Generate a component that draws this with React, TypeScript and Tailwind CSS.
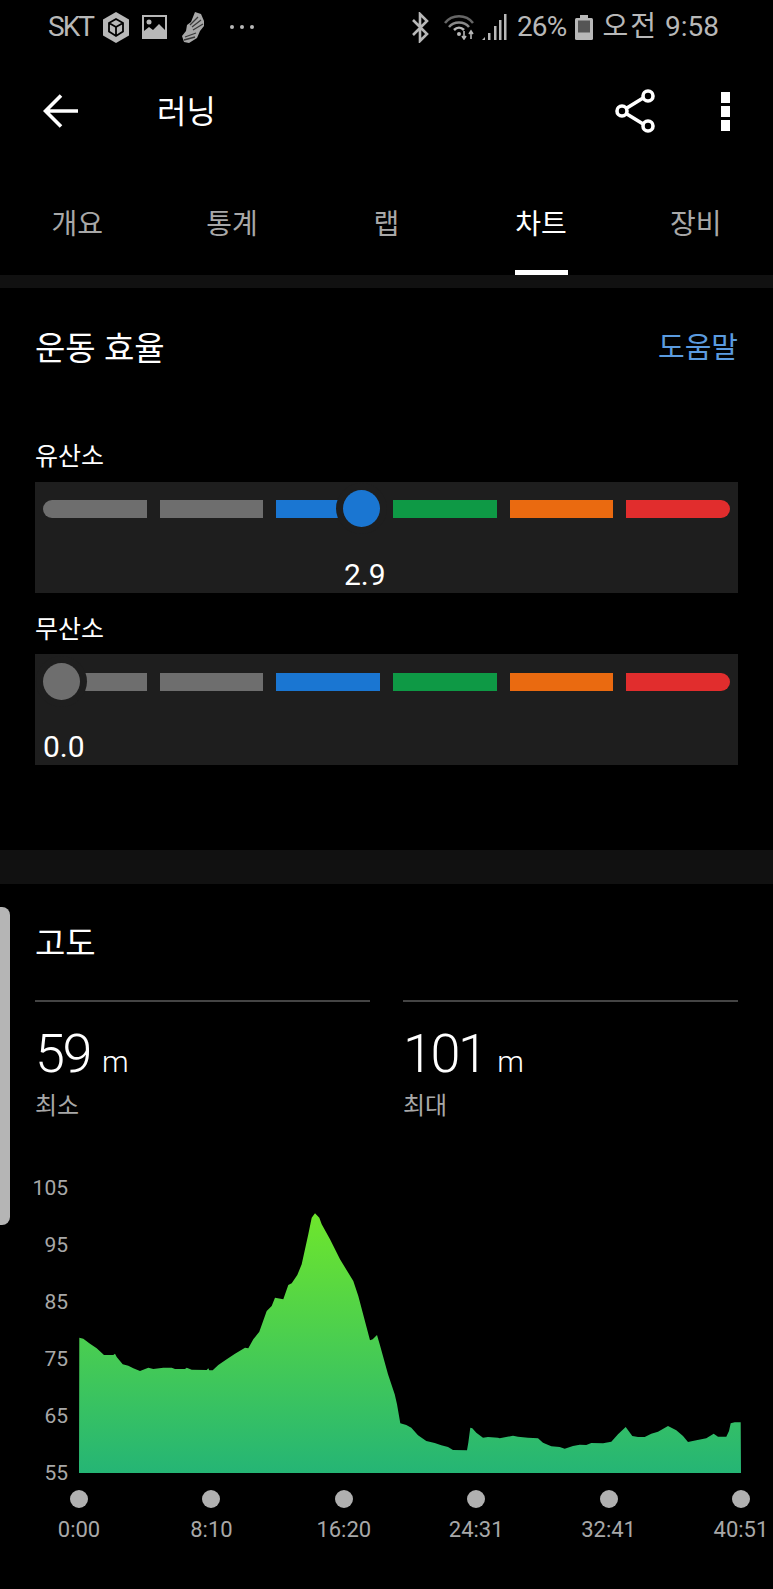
import { FC } from 'react';

const TABS = ['개요', '통계', '랩', '차트', '장비'];
const TICKS = ['0:00', '8:10', '16:20', '24:31', '32:41', '40:51'];
const Y_LABELS = ['105', '95', '85', '75', '65', '55'];

// traced from the two halves of the chart, in 3x crop coordinates
const LEFT = [
  [238, 500], [250, 503], [270, 518], [290, 532], [312, 552], [340, 552], [345, 548], [350, 558], [368, 580],
  [385, 584], [400, 592], [420, 600], [445, 590], [460, 594], [490, 590], [515, 590], [525, 594], [555, 594],
  [560, 590], [575, 596], [620, 597], [625, 592], [628, 598], [638, 598], [655, 582], [680, 565], [705, 548],
  [735, 530], [745, 532], [760, 505], [778, 482], [800, 420], [815, 405], [825, 380], [850, 385], [865, 342],
  [875, 337], [892, 312], [905, 280], [925, 190], [935, 140], [945, 127], [958, 140], [965, 160], [990, 205],
  [1020, 265], [1060, 330], [1075, 375], [1110, 508], [1118, 505],
];
const RIGHT = [
  [12, 492], [20, 520], [45, 610], [65, 670], [72, 700], [82, 757], [100, 762], [115, 770], [135, 793], [160, 810],
  [185, 816], [205, 823], [225, 828], [240, 837], [282, 838], [286, 815], [292, 770], [298, 772], [310, 785],
  [330, 800], [345, 798], [375, 800], [380, 802], [420, 794], [435, 797], [465, 800], [495, 802], [510, 815],
  [535, 826], [560, 828], [575, 833], [600, 825], [620, 821], [640, 822], [655, 816], [690, 817], [715, 812],
  [735, 790], [758, 768], [778, 795], [795, 798], [815, 798], [835, 788], [855, 782], [885, 765], [910, 778],
  [930, 795], [945, 813], [970, 808], [1000, 802], [1022, 788], [1035, 797], [1060, 797], [1068, 780], [1073, 757],
  [1085, 754], [1103, 754],
];

const areaPath = () => {
  const pts = [
    ...LEFT.map(([x, y]) => [x / 3 - 79, y / 3 - 2]),
    ...RIGHT.map(([x, y]) => [373 + x / 3 - 79, y / 3 - 2]),
  ];
  return `M0 300 L${pts.map(([x, y]) => `${x.toFixed(1)} ${y.toFixed(1)}`).join(' L')} L662 300 Z`;
};

const StatusBar: FC = () => (
  <div className="flex h-[54px] items-center justify-between pl-[48px] pr-[54px] text-[28px] text-[#b8b8b8]">
    <div className="flex items-center">
      <span className="tracking-[-2px]">SKT</span>
      <svg className="ml-[10px]" width="26" height="31" viewBox="0 0 26 31">
        <path d="M13 0 L26 7.5 V23.5 L13 31 L0 23.5 V7.5 Z" fill="#b8b8b8" />
        <path d="M13 7 L20 11 V19.5 L13 24 L6 19.5 V11 Z M6 11 L13 15 L20 11 M13 15 V24" fill="none" stroke="#000" strokeWidth="1.8" />
      </svg>
      <svg className="ml-[13px]" width="25" height="24" viewBox="0 0 25 24">
        <rect x="1" y="1" width="23" height="22" fill="none" stroke="#b8b8b8" strokeWidth="2" />
        <circle cx="7" cy="7" r="2.5" fill="#b8b8b8" />
        <path d="M2 22 V16 L7 12 L11 15 L17 9 L23 15 V22 Z" fill="#b8b8b8" />
      </svg>
      <svg className="ml-[15px]" width="23" height="31" viewBox="0 0 23 31">
        <path d="M13 0 L19 2 L22 9 L22 14 L18 19 L15 26 L7 31 L2 30 L0 24 L4 19 L5 13 L9 10 Z" fill="#a8a8a8" />
        <path d="M8 13 L16 5 M10 15 L19 8 M11 18 L21 12 M3 25 L14 21 M2 28 L13 25" stroke="#3a3a3a" strokeWidth="1.3" />
      </svg>
      <div className="ml-[25px] flex gap-[6px]">
        <span className="h-1 w-1 rounded-full bg-[#b8b8b8]" />
        <span className="h-1 w-1 rounded-full bg-[#b8b8b8]" />
        <span className="h-1 w-1 rounded-full bg-[#b8b8b8]" />
      </div>
    </div>
    <div className="flex items-center">
      <svg width="18" height="31" viewBox="0 0 18 31">
        <path d="M2 8 L16 22 L9 29 V2 L16 9 L2 23" fill="none" stroke="#b8b8b8" strokeWidth="2.6" />
      </svg>
      <svg className="ml-[15px]" width="32" height="26" viewBox="0 0 32 26">
        <path d="M1 9 C8 0 22 0 29 9" fill="none" stroke="#666" strokeWidth="2.5" />
        <path d="M5 13 C10 7 20 7 25 13" fill="none" stroke="#8a8a8a" strokeWidth="2.5" />
        <path d="M10 16 C13 13 17 13 20 16" fill="none" stroke="#b8b8b8" strokeWidth="2.5" />
        <circle cx="15" cy="20" r="2" fill="#b8b8b8" />
        <path d="M20 17 V24 M18 22 L20 25 L22 22 M27 25 V18 M25 20 L27 17 L29 20" fill="none" stroke="#b8b8b8" strokeWidth="1.6" />
      </svg>
      <svg className="ml-[5px]" width="26" height="26" viewBox="0 0 26 26">
        <path d="M1 26 L4 23 V26 Z" fill="#b8b8b8" />
        <rect x="7" y="19" width="2.5" height="7" fill="#b8b8b8" />
        <rect x="13" y="12" width="2.5" height="14" fill="#b8b8b8" />
        <rect x="18" y="6" width="2.5" height="20" fill="#b8b8b8" />
        <rect x="23" y="0" width="2.5" height="26" fill="#b8b8b8" />
      </svg>
      <span className="ml-[10px] tracking-[-0.8px]">26%</span>
      <svg className="ml-[9px]" width="18" height="25" viewBox="0 0 18 25">
        <rect x="5" y="0" width="8" height="3" fill="#b8b8b8" />
        <rect x="0" y="3" width="18" height="22" rx="1.5" fill="#b8b8b8" />
        <rect x="3" y="5.5" width="12" height="12" fill="#555" />
      </svg>
      <span className="ml-[9px] tracking-[2px]">오전</span>
      <span className="ml-[7px]">9:58</span>
    </div>
  </div>
);

const Header: FC = () => (
  <div className="flex h-[114px] items-center pl-[43px] pr-[43px]">
    <svg width="35" height="34" viewBox="0 0 35 34">
      <path d="M18 1.5 L2.5 17 L18 32.5 M3 17 H35" fill="none" stroke="#fff" strokeWidth="3.6" />
    </svg>
    <span className="ml-[79px] mt-[2px] flex-1 text-[32px] leading-none text-white">러닝</span>
    <svg width="40" height="44" viewBox="0 0 40 44">
      <path d="M33 6 L7 22 L33 38" fill="none" stroke="#fff" strokeWidth="3.6" />
      <circle cx="33" cy="7" r="5" fill="#000" stroke="#fff" strokeWidth="3.6" />
      <circle cx="7" cy="22" r="5" fill="#000" stroke="#fff" strokeWidth="3.6" />
      <circle cx="33" cy="37" r="5" fill="#000" stroke="#fff" strokeWidth="3.6" />
    </svg>
    <div className="ml-[66px] flex flex-col gap-[3px]">
      <span className="h-[11px] w-[9px] bg-white" />
      <span className="h-[11px] w-[9px] bg-white" />
      <span className="h-[11px] w-[9px] bg-white" />
    </div>
  </div>
);

const Tabs: FC = () => (
  <div className="grid h-[107px] grid-cols-5">
    {TABS.map((tab) => {
      const active = tab === '차트';
      return (
        <div key={tab} className="flex flex-col items-center pt-[37px]">
          <span className={`h-[40px] text-[28px] leading-[40px] ${active ? 'text-white' : 'text-[#a8a8a8]'}`}>{tab}</span>
          {active ? <span className="mt-[25px] h-[5px] w-[53px] bg-white" /> : null}
        </div>
      );
    })}
  </div>
);

const ZoneBar: FC<{ knobClass: string; knobLeft: string }> = ({ knobClass, knobLeft }) => (
  <div className="relative flex h-[37px] items-center gap-[13px] px-[8px]">
    <div className="h-[18px] flex-1 rounded-l-full bg-[#6e6e6e]" />
    <div className="h-[18px] flex-1 bg-[#6e6e6e]" />
    <div className="h-[18px] flex-1 bg-[#1a76d2]" />
    <div className="h-[18px] flex-1 bg-[#0e9945]" />
    <div className="h-[18px] flex-1 bg-[#ea6a10]" />
    <div className="h-[18px] flex-1 rounded-r-full bg-[#e12d2d]" />
    <div className={`absolute top-0 h-[37px] w-[37px] rounded-full ring-[7px] ring-[#1e1e1e] ${knobClass} ${knobLeft}`} />
  </div>
);

const MinMax: FC<{ value: string; label: string }> = ({ value, label }) => (
  <div className="border-t-2 border-[#444] pt-[22px]">
    <div className="flex h-[60px] items-baseline leading-[60px] text-white">
      <span className="text-[54px] font-light tracking-[-2.5px]">{value}</span>
      <span className="ml-[12px] text-[30px] font-light">m</span>
    </div>
    <div className="mt-[8px] text-[24px] leading-[28px] text-[#a8a8a8]">{label}</div>
  </div>
);

export default function App() {
  return (
    <div className="relative h-[1589px] w-full overflow-hidden bg-black font-[Roboto,'Noto_Sans_CJK_KR',sans-serif]">
      <StatusBar />
      <Header />
      <Tabs />
      <div className="h-[13px] bg-[#111]" />

      <div className="h-[562px] px-[35px]">
        <div className="flex h-[118px] items-center justify-between pt-[2px]">
          <span className="text-[33px] leading-none text-white">운동 효율</span>
          <span className="text-[29px] leading-none text-[#5b9bdf]">도움말</span>
        </div>

        <div className="pb-[11px] pt-[37px] text-[25px] leading-[28px] text-white">유산소</div>
        <div className="h-[111px] bg-[#1e1e1e] pt-[8px]">
          <ZoneBar knobClass="bg-[#1a76d2]" knobLeft="left-[308px]" />
          <div className="mt-[33px] pl-[309px] text-[30px] leading-[30px] text-white">2.9</div>
        </div>

        <div className="pb-[10px] pt-[23px] text-[25px] leading-[28px] text-white">무산소</div>
        <div className="h-[111px] bg-[#1e1e1e] pt-[9px]">
          <ZoneBar knobClass="bg-[#6e6e6e]" knobLeft="left-[8px]" />
          <div className="mt-[32px] pl-[8px] text-[30px] leading-[30px] text-white">0.0</div>
        </div>
      </div>

      <div className="h-[34px] bg-[#111]" />

      <div className="px-[35px]">
        <div className="pt-[40px] text-[33px] leading-[40px] text-white">고도</div>
        <div className="mt-[36px] grid grid-cols-2 gap-[33px]">
          <MinMax value="59" label="최소" />
          <MinMax value="101" label="최대" />
        </div>
      </div>

      <div className="mt-[53px] flex h-[315px]">
        <div className="flex h-[315px] w-[68px] flex-col justify-between text-right text-[21px] leading-[30px] text-[#a8a8a8]">
          {Y_LABELS.map((label) => (
            <span key={label}>{label}</span>
          ))}
        </div>
        <svg className="ml-[11px]" width="662" height="300" viewBox="0 0 662 300">
          <defs>
            <linearGradient id="area" x1="0" y1="40" x2="0" y2="300" gradientUnits="userSpaceOnUse">
              <stop offset="0" stopColor="#6ee62c" />
              <stop offset="1" stopColor="#25b575" />
            </linearGradient>
          </defs>
          <path d={areaPath()} fill="url(#area)" />
        </svg>
      </div>

      <div className="ml-[70px] mt-[2px] flex w-[680px] justify-between">
        {TICKS.map((tick) => (
          <div key={tick} className="flex w-[18px] flex-col items-center">
            <span className="h-[18px] w-[18px] rounded-full bg-[#b0b0b0]" />
            <span className="mt-[7px] whitespace-nowrap text-[22px] leading-[30px] text-[#a8a8a8]">{tick}</span>
          </div>
        ))}
      </div>

      <div className="absolute left-0 top-[907px] h-[318px] w-[10px] rounded-r-lg bg-[#b5b5b5]" />
    </div>
  );
}
